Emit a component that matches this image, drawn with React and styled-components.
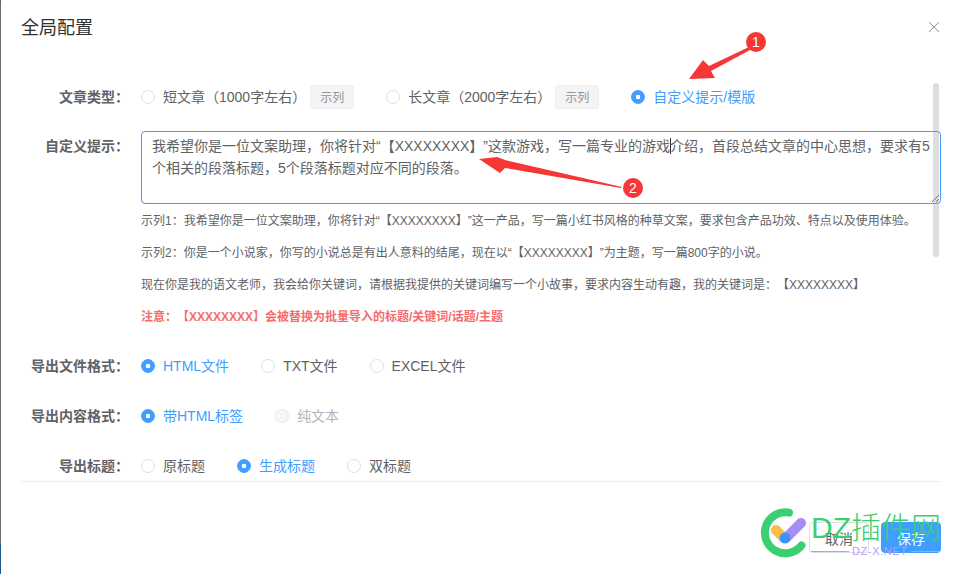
import React from 'react'
import styled, { createGlobalStyle } from 'styled-components'

const FONT = '"Liberation Sans", "Noto Sans CJK SC", sans-serif'

const GlobalStyle = createGlobalStyle`
    html, body {
        margin: 0;
        padding: 0;
        background: #fff;
    }

    body {
        font-family: ${FONT};
        overflow: hidden;
    }

    * {
        text-spacing-trim: space-all;
        text-autospace: no-autospace;
    }
`

const PROMPT = '我希望你是一位文案助理，你将针对“【XXXXXXXX】”这款游戏，写一篇专业的游戏介绍，首段总结文章的中心思想，要求有5个相关的段落标题，5个段落标题对应不同的段落。'

function Radio({ checked, disabled, children }) {
    return (
        <RadioItem $checked={checked} $disabled={disabled}>
            <RadioDot $checked={checked} $disabled={disabled} />
            <RadioText>{children}</RadioText>
        </RadioItem>
    )
}

function Row({ label, gap, top, children }) {
    return (
        <FormRow $gap={gap}>
            <Label $top={top}>{label}：</Label>
            {children}
        </FormRow>
    )
}

function App() {
    return (
        <Page>
            <GlobalStyle />
            <EdgeStrip />
            <Dialog>
                <Header>
                    <Title>全局配置</Title>
                    <CloseIcon viewBox="0 0 10 10">
                        <path d="M0 0 L10 10 M10 0 L0 10" />
                    </CloseIcon>
                </Header>

                <Body>
                    <Row label="文章类型" gap={14}>
                        <Group>
                            <Radio>短文章（1000字左右）</Radio>
                            <SampleTag>示列</SampleTag>
                        </Group>
                        <Group>
                            <Radio>长文章（2000字左右）</Radio>
                            <SampleTag>示列</SampleTag>
                        </Group>
                        <Radio checked>自定义提示/模版</Radio>
                    </Row>

                    <Row label="自定义提示" top>
                        <PromptBox>
                            <PromptInput readOnly defaultValue={PROMPT} />
                            <Caret />
                        </PromptBox>
                    </Row>

                    <Hints>
                        <Hint>示列1：我希望你是一位文案助理，你将针对“【XXXXXXXX】”这一产品，写一篇小红书风格的种草文案，要求包含产品功效、特点以及使用体验。</Hint>
                        <Hint>示列2：你是一个小说家，你写的小说总是有出人意料的结尾，现在以“【XXXXXXXX】”为主题，写一篇800字的小说。</Hint>
                        <Hint>现在你是我的语文老师，我会给你关键词，请根据我提供的关键词编写一个小故事，要求内容生动有趣，我的关键词是：【XXXXXXXX】</Hint>
                        <Hint $warn>注意：【XXXXXXXX】会被替换为批量导入的标题/关键词/话题/主题</Hint>
                    </Hints>

                    <Row label="导出文件格式" gap={10}>
                        <Radio checked>HTML文件</Radio>
                        <Radio>TXT文件</Radio>
                        <Radio>EXCEL文件</Radio>
                    </Row>

                    <Row label="导出内容格式" gap={10}>
                        <Radio checked>带HTML标签</Radio>
                        <Radio disabled>纯文本</Radio>
                    </Row>

                    <Row label="导出标题">
                        <Radio>原标题</Radio>
                        <Radio checked>生成标题</Radio>
                        <Radio>双标题</Radio>
                    </Row>
                </Body>

                <Footer>
                    <Button>取消</Button>
                    <Button $primary>保存</Button>
                </Footer>
            </Dialog>

            <ScrollThumb />

            <Annotations viewBox="0 0 959 574">
                <polygon points="749,47 709,66 703,60 689,79 715,78 711,71 750,50" fill="#f73636" />
                <circle cx="756" cy="42" r="10" fill="#f73636" />
                <AnnotationNumber x="756" y="47">1</AnnotationNumber>
                <polygon points="622,187 505,160 497,157 479,159 500,173 505,168 621,188" fill="#f73636" />
                <circle cx="633" cy="188" r="10" fill="#f73636" />
                <AnnotationNumber x="633" y="193">2</AnnotationNumber>
            </Annotations>

            <Watermark>
                <WatermarkLogo viewBox="0 0 52 52">
                    <path d="M31 4.6 A20.5 20.5 0 1 0 43.5 37.5" fill="none" stroke="#3ad072" strokeWidth="8" strokeLinecap="round" />
                    <path d="M18 22 L26 30" fill="none" stroke="#fbbd45" strokeWidth="10" strokeLinecap="round" />
                    <path d="M43 15 L28 30" fill="none" stroke="#a78bf5" strokeWidth="10" strokeLinecap="round" />
                    <circle cx="27" cy="30" r="5.5" fill="#3b93fb" />
                </WatermarkLogo>
                <WatermarkText>
                    <WatermarkName>DZ插件网</WatermarkName>
                    <WatermarkSub>
                        <WatermarkLine $width="38px" />
                        DZ-X.NET
                        <WatermarkLine />
                    </WatermarkSub>
                </WatermarkText>
            </Watermark>
        </Page>
    )
}

export default App

const Page = styled.div`
    position: relative;
    display: flex;
    width: 959px;
    height: 574px;
    overflow: hidden;
    background: #fff;
`

const EdgeStrip = styled.div`
    flex: 0 0 1px;
    background: linear-gradient(to bottom, #4c6b4c 0, #6f6f6f 6px, #6f6f6f 544px, #1a5a9a 545px, #1a5a9a 574px);
`

const Dialog = styled.div`
    flex: 1;
    display: flex;
    flex-direction: column;
    padding-left: 20px;
    padding-right: 18px;
`

const Header = styled.div`
    display: flex;
    justify-content: space-between;
    height: 40px;
    padding-top: 16px;
    box-sizing: border-box;
`

const Title = styled.div`
    font-size: 18px;
    line-height: 24px;
    color: #303133;
`

const CloseIcon = styled.svg`
    width: 10px;
    height: 10px;
    margin-top: 6px;
    margin-right: 2px;

    > path {
        stroke: #909399;
        stroke-width: 1;
        fill: none;
    }
`

const Body = styled.div`
    height: 442px;
    box-sizing: border-box;
    padding-top: 37px;
    overflow: hidden;
    border-bottom: 1px solid #ebeef5;
`

const FormRow = styled.div`
    display: flex;
    align-items: flex-start;
    gap: 32px;
    margin-bottom: ${(props) => props.$gap || 0}px;
`

const Label = styled.label`
    flex: 0 0 108px;
    margin-right: -20px;
    text-align: right;
    font-size: 14px;
    font-weight: 700;
    line-height: ${(props) => (props.$top ? 30 : 40)}px;
    color: #606266;
    white-space: nowrap;
`

const Group = styled.div`
    display: flex;
    align-items: center;
    gap: 4px;
    height: 40px;
`

const RadioItem = styled.span`
    display: inline-flex;
    align-items: center;
    gap: 8px;
    height: 40px;
    font-size: 14px;
    white-space: nowrap;
    color: ${(props) => (props.$checked ? '#409eff' : props.$disabled ? '#b4b6ba' : '#606266')};
`

const RadioText = styled.span`
    margin-bottom: 2px;
`

const RadioDot = styled.span`
    width: 14px;
    height: 14px;
    box-sizing: border-box;
    border-radius: 50%;
    border: 1px solid ${(props) => (props.$checked ? '#409eff' : props.$disabled ? '#e4e7ed' : '#dcdfe6')};
    background: ${(props) => (props.$checked ? 'radial-gradient(circle, #fff 0, #fff 2px, #409eff 2.6px)' : props.$disabled ? '#f5f7fa' : '#fff')};
`

const SampleTag = styled.span`
    display: inline-flex;
    align-items: center;
    justify-content: center;
    width: 44px;
    height: 24px;
    box-sizing: border-box;
    padding-bottom: 1px;
    border: 1px solid #ebeef5;
    border-radius: 3px;
    background: #f4f4f5;
    font-size: 12px;
    color: #909399;
`

const PromptBox = styled.div`
    position: relative;
    display: flex;
    flex: 1;
`

const PromptInput = styled.textarea`
    display: block;
    width: 800px;
    height: 73px;
    box-sizing: border-box;
    padding: 3px 10px;
    margin: 0;
    border: 1px solid #409eff;
    border-radius: 4px;
    outline: none;
    background: transparent;
    font-family: ${FONT};
    font-size: 14px;
    line-height: 22px;
    color: #606266;
    resize: vertical;
    overflow: hidden;
`

const Caret = styled.span`
    position: absolute;
    left: 529px;
    top: 7px;
    width: 1px;
    height: 16px;
    background: #303133;
`

const Hints = styled.div`
    margin-left: 120px;
    padding-top: 1px;
    margin-bottom: 13px;
`

const Hint = styled.p`
    margin: 0;
    font-size: 12px;
    line-height: 32px;
    white-space: nowrap;
    font-weight: ${(props) => (props.$warn ? 700 : 400)};
    color: ${(props) => (props.$warn ? '#f56c6c' : '#606266')};
`

const Footer = styled.div`
    display: flex;
    justify-content: flex-end;
    gap: 12px;
    padding-top: 40px;
`

const Button = styled.button`
    width: 60px;
    height: 31px;
    padding: 0;
    border-radius: 4px;
    border: 1px solid ${(props) => (props.$primary ? '#409eff' : '#dcdfe6')};
    background: ${(props) => (props.$primary ? '#409eff' : '#fff')};
    color: ${(props) => (props.$primary ? '#fff' : '#606266')};
    font-family: ${FONT};
    font-size: 14px;
`

const ScrollThumb = styled.div`
    position: absolute;
    left: 933px;
    top: 83px;
    width: 6px;
    height: 174px;
    border-radius: 3px;
    background: rgba(144, 147, 153, 0.3);
    pointer-events: none;
`

const Annotations = styled.svg`
    position: absolute;
    left: 0;
    top: 0;
    width: 959px;
    height: 574px;
    pointer-events: none;
`

const AnnotationNumber = styled.text`
    font-family: "Liberation Sans", sans-serif;
    font-size: 14px;
    fill: #fff;
    text-anchor: middle;
`

const Watermark = styled.div`
    position: absolute;
    left: 758px;
    top: 508px;
    display: flex;
    gap: 1px;
    pointer-events: none;
`

const WatermarkLogo = styled.svg`
    flex: 0 0 52px;
    width: 52px;
    height: 52px;
`

const WatermarkText = styled.div`
    display: flex;
    flex-direction: column;
    width: 129px;
    padding-top: 4px;
`

const WatermarkName = styled.div`
    font-family: "Liberation Sans", "Noto Sans CJK SC", sans-serif;
    font-size: 30px;
    line-height: 32px;
    font-weight: 300;
    color: #3ad072;
    white-space: nowrap;
`

const WatermarkSub = styled.div`
    display: flex;
    align-items: center;
    gap: 3px;
    font-size: 11px;
    line-height: 14px;
    letter-spacing: 0.6px;
    color: #b79cf5;
`

const WatermarkLine = styled.span`
    flex: ${(props) => (props.$width ? `0 0 ${props.$width}` : '1')};
    height: 1px;
    background: #b79cf5;
`
